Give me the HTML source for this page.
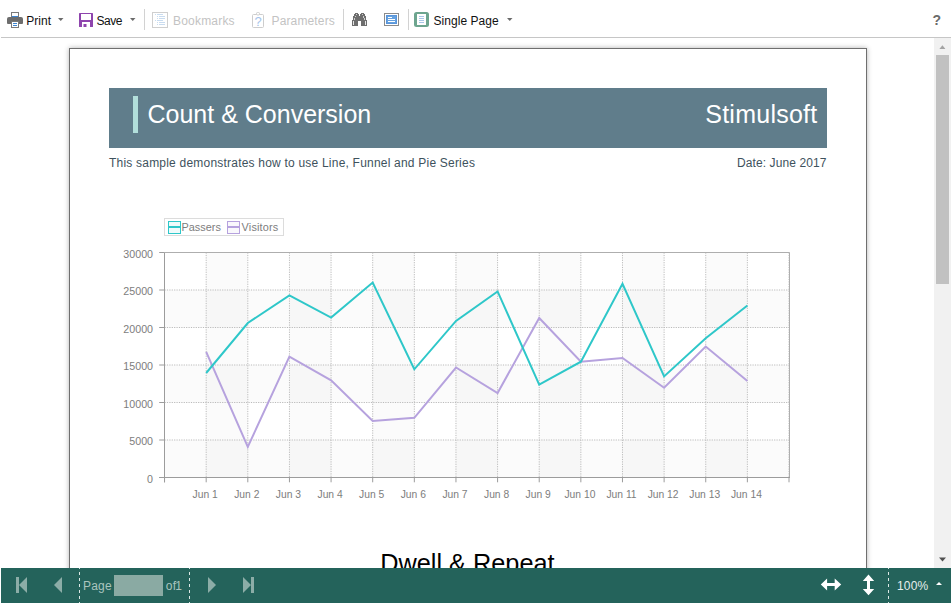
<!DOCTYPE html>
<html>
<head>
<meta charset="utf-8">
<title>Report Viewer</title>
<style>
html,body{margin:0;padding:0;background:#fff;}
body{width:952px;height:604px;position:relative;overflow:hidden;font-family:"Liberation Sans",Arial,sans-serif;font-size:12px;color:#000;}
.abs{position:absolute;}
#toolbar{position:absolute;left:1px;top:0;width:950px;height:37px;border-bottom:1px solid #c6c6c6;background:#fff;}
.tb-text{position:absolute;top:14px;height:14px;line-height:14px;font-size:12px;white-space:nowrap;color:#111;}
.tb-dis{color:#c3c3c3;}
.tb-sep{position:absolute;top:9px;width:1px;height:21px;background:#d2d2d2;}
.caret{position:absolute;width:0;height:0;border-left:3px solid transparent;border-right:3px solid transparent;border-top:3px solid #6b6b6b;}
#view{position:absolute;left:1px;top:38px;width:933px;height:530px;overflow:hidden;background:#fff;}
#page{position:absolute;left:68px;top:10px;width:796px;height:900px;border:1px solid #6f6f6f;background:#fff;box-shadow:0 0 5px rgba(0,0,0,0.3);}
#sb{position:absolute;left:934px;top:38px;width:17px;height:530px;background:#f1f1f1;}
#sb .thumb{position:absolute;left:2px;top:17px;width:13px;height:229px;background:#c1c1c1;}
#nav{position:absolute;left:1px;top:568px;width:950px;height:35px;background:#24635b;}
.nav-sep{position:absolute;top:0;width:1px;height:35px;background-image:linear-gradient(to bottom,#dbe8e5 50%,rgba(0,0,0,0) 50%);background-size:1px 6px;background-position:0 -2px;background-repeat:repeat-y;}
.nav-text{position:absolute;top:11px;height:14px;line-height:14px;font-size:12px;color:#aac5bf;white-space:nowrap;letter-spacing:0.2px;}
</style>
</head>
<body>

<div id="view">
  <div id="page">
    <!-- header band : page content origin is (70,49) in screen coords -->
    <div class="abs" style="left:39px;top:39px;width:718px;height:60px;background:#607d8b;"></div>
    <div class="abs" style="left:63px;top:47px;width:5px;height:37px;background:#b2dfdb;"></div>
    <div class="abs" id="t1" style="left:77.5px;top:50px;height:30px;line-height:30px;font-size:25px;color:#fff;white-space:nowrap;">Count &amp; Conversion</div>
    <div class="abs" id="t2" style="right:48.5px;top:50px;height:30px;line-height:30px;font-size:25px;color:#fff;white-space:nowrap;letter-spacing:0.25px;">Stimulsoft</div>
    <div class="abs" id="t3" style="left:39px;top:106px;height:16px;line-height:16px;font-size:12px;color:#3e525d;white-space:nowrap;letter-spacing:0.21px;">This sample demonstrates how to use Line, Funnel and Pie Series</div>
    <div class="abs" id="t4" style="right:39.5px;top:106px;height:16px;line-height:16px;font-size:12px;color:#3e525d;white-space:nowrap;letter-spacing:0.1px;">Date: June 2017</div>

    <!-- chart -->
    <svg class="abs" id="chart" style="left:0;top:150px;" width="796" height="320" viewBox="70 199 796 320" font-family="'Liberation Sans',Arial,sans-serif">
      <rect x="164.5" y="290.00" width="625.0" height="37.50" fill="#000" fill-opacity="0.016"/>
      <rect x="164.5" y="365.00" width="625.0" height="37.50" fill="#000" fill-opacity="0.016"/>
      <rect x="164.5" y="440.00" width="625.0" height="37.50" fill="#000" fill-opacity="0.016"/>
      <rect x="206.18" y="252.5" width="41.63" height="225.0" fill="#000" fill-opacity="0.016"/>
      <rect x="289.44" y="252.5" width="41.63" height="225.0" fill="#000" fill-opacity="0.016"/>
      <rect x="372.70" y="252.5" width="41.63" height="225.0" fill="#000" fill-opacity="0.016"/>
      <rect x="455.96" y="252.5" width="41.63" height="225.0" fill="#000" fill-opacity="0.016"/>
      <rect x="539.22" y="252.5" width="41.63" height="225.0" fill="#000" fill-opacity="0.016"/>
      <rect x="622.48" y="252.5" width="41.63" height="225.0" fill="#000" fill-opacity="0.016"/>
      <rect x="705.74" y="252.5" width="41.63" height="225.0" fill="#000" fill-opacity="0.016"/>
      <path d="M164.5 290.00 H789.5 M164.5 327.50 H789.5 M164.5 365.00 H789.5 M164.5 402.50 H789.5 M164.5 440.00 H789.5 M206.18 252.5 V477.5 M247.81 252.5 V477.5 M289.44 252.5 V477.5 M331.07 252.5 V477.5 M372.70 252.5 V477.5 M414.33 252.5 V477.5 M455.96 252.5 V477.5 M497.59 252.5 V477.5 M539.22 252.5 V477.5 M580.85 252.5 V477.5 M622.48 252.5 V477.5 M664.11 252.5 V477.5 M705.74 252.5 V477.5 M747.37 252.5 V477.5 M789.00 252.5 V477.5" stroke="#bbbbbb" stroke-width="1" stroke-dasharray="1.2 1.2" fill="none"/>
      <path d="M164.5 252.5 H789.5 V477.5" stroke="#aeaeae" stroke-width="1" fill="none"/>
      <path d="M164.5 252.5 V482.3 M159.2 477.5 H790.0 M159.2 252.50 H164.5 M159.2 290.00 H164.5 M159.2 327.50 H164.5 M159.2 365.00 H164.5 M159.2 402.50 H164.5 M159.2 440.00 H164.5 M159.2 477.50 H164.5 M164.55 477.5 V482.3 M206.18 477.5 V482.3 M247.81 477.5 V482.3 M289.44 477.5 V482.3 M331.07 477.5 V482.3 M372.70 477.5 V482.3 M414.33 477.5 V482.3 M455.96 477.5 V482.3 M497.59 477.5 V482.3 M539.22 477.5 V482.3 M580.85 477.5 V482.3 M622.48 477.5 V482.3 M664.11 477.5 V482.3 M705.74 477.5 V482.3 M747.37 477.5 V482.3 M789.00 477.5 V482.3" stroke="#9c9c9c" stroke-width="1" fill="none"/>
      <polyline points="206.2,351.8 247.8,446.9 289.4,356.6 331.1,380.3 372.7,421.0 414.3,417.8 456.0,367.5 497.6,393.0 539.2,318.0 580.9,361.7 622.5,358.0 664.1,387.8 705.7,346.6 747.4,380.9" fill="none" stroke="#b6a2de" stroke-width="2" stroke-linejoin="miter"/>
      <polyline points="206.2,373.0 247.8,323.0 289.4,295.4 331.1,317.6 372.7,282.6 414.3,369.3 456.0,320.9 497.6,291.4 539.2,384.6 580.9,361.7 622.5,283.8 664.1,376.4 705.7,338.2 747.4,305.5" fill="none" stroke="#2ec7c9" stroke-width="2" stroke-linejoin="miter"/>
      <text x="153" y="257.7" text-anchor="end" font-size="10.67" fill="#7d7d7d">30000</text>
      <text x="153" y="295.2" text-anchor="end" font-size="10.67" fill="#7d7d7d">25000</text>
      <text x="153" y="332.7" text-anchor="end" font-size="10.67" fill="#7d7d7d">20000</text>
      <text x="153" y="370.2" text-anchor="end" font-size="10.67" fill="#7d7d7d">15000</text>
      <text x="153" y="407.7" text-anchor="end" font-size="10.67" fill="#7d7d7d">10000</text>
      <text x="153" y="445.2" text-anchor="end" font-size="10.67" fill="#7d7d7d">5000</text>
      <text x="153" y="482.7" text-anchor="end" font-size="10.67" fill="#7d7d7d">0</text>
      <text x="205.2" y="498.1" text-anchor="middle" font-size="10.3" fill="#7d7d7d">Jun 1</text>
      <text x="246.8" y="498.1" text-anchor="middle" font-size="10.3" fill="#7d7d7d">Jun 2</text>
      <text x="288.4" y="498.1" text-anchor="middle" font-size="10.3" fill="#7d7d7d">Jun 3</text>
      <text x="330.1" y="498.1" text-anchor="middle" font-size="10.3" fill="#7d7d7d">Jun 4</text>
      <text x="371.7" y="498.1" text-anchor="middle" font-size="10.3" fill="#7d7d7d">Jun 5</text>
      <text x="413.3" y="498.1" text-anchor="middle" font-size="10.3" fill="#7d7d7d">Jun 6</text>
      <text x="455.0" y="498.1" text-anchor="middle" font-size="10.3" fill="#7d7d7d">Jun 7</text>
      <text x="496.6" y="498.1" text-anchor="middle" font-size="10.3" fill="#7d7d7d">Jun 8</text>
      <text x="538.2" y="498.1" text-anchor="middle" font-size="10.3" fill="#7d7d7d">Jun 9</text>
      <text x="579.9" y="498.1" text-anchor="middle" font-size="10.3" fill="#7d7d7d">Jun 10</text>
      <text x="621.5" y="498.1" text-anchor="middle" font-size="10.3" fill="#7d7d7d">Jun 11</text>
      <text x="663.1" y="498.1" text-anchor="middle" font-size="10.3" fill="#7d7d7d">Jun 12</text>
      <text x="704.7" y="498.1" text-anchor="middle" font-size="10.3" fill="#7d7d7d">Jun 13</text>
      <text x="746.4" y="498.1" text-anchor="middle" font-size="10.3" fill="#7d7d7d">Jun 14</text>
      <rect x="164.5" y="218.5" width="119" height="17" fill="#fff" stroke="#dcdcdc" stroke-width="1" shape-rendering="crispEdges"/>
      <rect x="168.5" y="221.5" width="12" height="12" fill="#2ec7c9" fill-opacity="0.08" stroke="#2ec7c9" stroke-width="1" shape-rendering="crispEdges"/><rect x="168" y="226" width="13" height="2" fill="#2ec7c9" shape-rendering="crispEdges"/>
      <text x="181.5" y="230.8" font-size="10.9" fill="#7d7d7d">Passers</text>
      <rect x="227.5" y="221.5" width="12" height="12" fill="#b6a2de" fill-opacity="0.08" stroke="#b6a2de" stroke-width="1" shape-rendering="crispEdges"/><rect x="227" y="226" width="13" height="2" fill="#b6a2de" shape-rendering="crispEdges"/>
      <text x="241.6" y="230.8" font-size="10.9" fill="#7d7d7d" letter-spacing="0.15">Visitors</text>
    </svg>

    <div class="abs" id="t5" style="left:-0.6px;width:796px;top:497px;text-align:center;height:34px;line-height:34px;font-size:25.3px;color:#000;white-space:nowrap;">Dwell &amp; Repeat</div>
  </div>
</div>

<div id="sb">
  <div class="thumb"></div>
  <svg class="abs" style="left:0;top:0" width="17" height="17"><path d="M5.400 11 L8.400 7.200 L11.400 11 Z" fill="#a3a3a3"/></svg>
  <svg class="abs" style="left:0;top:513px" width="17" height="17"><path d="M5 6.5 L12 6.5 L8.5 10.5 Z" fill="#505050"/></svg>
</div>

<div id="toolbar">
  <!-- coordinates inside toolbar are screen x - 1 -->
  <svg class="abs" style="left:6px;top:12px" width="16" height="16" viewBox="0 0 16 16">
    <rect x="4.5" y="0.5" width="7" height="5" fill="#fff" stroke="#7a7a7a"/>
    <rect x="5" y="4" width="6" height="1" fill="#3d85d1"/>
    <path d="M2 5 H14 Q16 5 16 7 V11 Q16 12 15 12 H1 Q0 12 0 11 V7 Q0 5 2 5 Z" fill="#6d6d6d"/>
    <rect x="4.5" y="9.5" width="7" height="6" fill="#fff" stroke="#7a7a7a"/>
    <rect x="6" y="11" width="4" height="1" fill="#3d85d1"/>
    <rect x="6" y="13" width="4" height="1" fill="#3d85d1"/>
  </svg>
  <div class="tb-text" style="left:25.3px;">Print</div>
  <svg class="abs" style="left:57px;top:18px" width="6" height="3" viewBox="0 0 6 3"><path d="M0 0 H5.500 L2.750 3 Z" fill="#6b6b6b"/></svg>

  <svg class="abs" style="left:78px;top:13px" width="14" height="14" viewBox="0 0 14 14">
    <rect x="0" y="0" width="14" height="14" rx="0.6" fill="#8e44ad"/>
    <rect x="2" y="1" width="10" height="6" fill="#fff"/>
    <rect x="3" y="9" width="8" height="5" fill="#fff"/>
    <rect x="4.5" y="11" width="3" height="3" fill="#8e44ad"/>
  </svg>
  <div class="tb-text" style="left:95.5px;letter-spacing:-0.5px;">Save</div>
  <svg class="abs" style="left:129px;top:18px" width="6" height="3" viewBox="0 0 6 3"><path d="M0 0 H5.500 L2.750 3 Z" fill="#6b6b6b"/></svg>

  <div class="tb-sep" style="left:143px;"></div>

  <svg class="abs" style="left:151px;top:12px" width="16" height="16" viewBox="0 0 16 16">
    <rect x="0.5" y="0.5" width="15" height="15" fill="#fff" stroke="#cfcfcf"/>
    <g fill="#c9dcf0">
      <rect x="3" y="2" width="1" height="1"/><rect x="5" y="2" width="6" height="1"/>
      <rect x="5" y="4" width="1" height="1"/><rect x="7" y="4" width="6" height="1"/>
      <rect x="5" y="6" width="1" height="1"/><rect x="7" y="6" width="6" height="1"/>
      <rect x="3" y="8" width="1" height="1"/><rect x="5" y="8" width="6" height="1"/>
      <rect x="5" y="10" width="1" height="1"/><rect x="7" y="10" width="6" height="1"/>
      <rect x="5" y="12" width="1" height="1"/><rect x="7" y="12" width="6" height="1"/>
    </g>
  </svg>
  <div class="tb-text tb-dis" style="left:172px;letter-spacing:0.2px;">Bookmarks</div>

  <svg class="abs" style="left:251px;top:11px" width="14" height="17" viewBox="0 0 14 17">
    <rect x="0.5" y="3.5" width="11" height="13" rx="1" fill="#fff" stroke="#cdcdcd"/>
    <rect x="4.5" y="1.5" width="3" height="2.5" rx="1" fill="#fff" stroke="#cdcdcd"/>
    <text x="6" y="14.6" text-anchor="middle" font-size="13" font-family="'Liberation Sans',Arial,sans-serif" fill="#a4c3ea">?</text>
  </svg>
  <div class="tb-text tb-dis" style="left:270.5px;letter-spacing:0.14px;">Parameters</div>

  <div class="tb-sep" style="left:342px;"></div>

  <svg class="abs" style="left:351px;top:13px" width="15" height="13" viewBox="0 0 15 13" shape-rendering="crispEdges">
    <path d="M3 0 H6 V1 H7 V3 H8 V1 H9 V0 H12 V1 H13 V3 H14 V7 H15 V13 H9 V8 H6 V13 H0 V7 H1 V3 H2 V1 H3 Z" fill="#6e6e6e"/>
    <g fill="#cfcfcf">
      <rect x="4" y="1" width="1" height="1"/><rect x="10" y="1" width="1" height="1"/>
      <rect x="3" y="3" width="1" height="1"/><rect x="11" y="3" width="1" height="1.500"/>
      <rect x="2" y="5" width="1" height="1.500"/><rect x="12" y="5" width="1" height="1.500"/>
      <rect x="1" y="8" width="1" height="4" fill="#e4e4e4"/><rect x="13" y="8" width="1" height="4" fill="#e4e4e4"/>
    </g>
  </svg>

  <svg class="abs" style="left:383px;top:13px" width="15" height="13" viewBox="0 0 15 13">
    <rect x="0.5" y="0.5" width="14" height="12" fill="#fff" stroke="#8b8b8b"/>
    <rect x="2" y="2" width="11" height="9" fill="#5894da"/><rect x="3" y="3" width="9" height="7" fill="#65a1df"/>
    <rect x="4" y="4" width="4" height="1" fill="#fff"/>
    <rect x="4" y="6" width="7" height="1" fill="#fff"/>
    <rect x="4" y="8" width="7" height="1" fill="#fff"/>
  </svg>

  <div class="tb-sep" style="left:407px;"></div>

  <svg class="abs" style="left:413px;top:12px" width="15" height="15" viewBox="0 0 15 15">
    <rect x="0" y="0" width="15" height="15" rx="2.5" fill="#6da58f"/>
    <rect x="3" y="2" width="9" height="11" fill="#fff"/>
    <rect x="5" y="4" width="5" height="1" fill="#a9c6e8"/>
    <rect x="5" y="6" width="5" height="1" fill="#a9c6e8"/>
    <rect x="5" y="8" width="5" height="1" fill="#a9c6e8"/>
    <rect x="5" y="10" width="5" height="1" fill="#a9c6e8"/>
  </svg>
  <div class="tb-text" style="left:432.5px;letter-spacing:0.05px;">Single Page</div>
  <svg class="abs" style="left:506px;top:18px" width="6" height="3" viewBox="0 0 6 3"><path d="M0 0 H5.500 L2.750 3 Z" fill="#6b6b6b"/></svg>

  <div class="abs" style="left:931.5px;top:12px;height:16px;line-height:16px;font-size:14px;font-weight:bold;color:#6b6b6b;">?</div>

</div>

<div id="nav">
  <!-- coordinates inside nav are screen x - 1, screen y - 568 -->
  <svg class="abs" style="left:14px;top:9px" width="13" height="16" viewBox="0 0 13 16">
    <rect x="1" y="0" width="3" height="16" fill="#8cada7"/>
    <path d="M12 0 V16 L4 8 Z" fill="#8cada7"/>
  </svg>
  <svg class="abs" style="left:52px;top:9px" width="9" height="16" viewBox="0 0 9 16">
    <path d="M9 0 V16 L1 8 Z" fill="#8cada7"/>
  </svg>
  <div class="nav-sep" style="left:78px;"></div>
  <div class="nav-text" style="left:82px;">Page</div>
  <div class="abs" style="left:113px;top:7px;width:49px;height:21px;background:#8aaaa3;"></div>
  <div class="nav-text" style="left:164.8px;">of</div>
  <div class="nav-text" style="left:174.3px;">1</div>
  <div class="nav-sep" style="left:188px;"></div>
  <svg class="abs" style="left:207px;top:9px" width="9" height="16" viewBox="0 0 9 16">
    <path d="M0 0 V16 L8 8 Z" fill="#8cada7"/>
  </svg>
  <svg class="abs" style="left:241px;top:9px" width="13" height="16" viewBox="0 0 13 16">
    <rect x="9" y="0" width="3" height="16" fill="#8cada7"/>
    <path d="M1 0 V16 L9 8 Z" fill="#8cada7"/>
  </svg>

  <svg class="abs" style="left:0;top:0" width="950" height="35" viewBox="0 0 950 35">
    <path d="M819.800 16.500 L826.100 10.600 V15 H833.700 V10.600 L840.200 16.500 L833.700 22.400 V18 H826.100 V22.400 Z" fill="#fff"/>
    <path d="M867.500 6.400 L873.200 13.100 H869 V20.900 H873.200 L867.500 27.200 L861.800 20.900 H866 V13.100 H861.800 Z" fill="#fff"/>
  </svg>
  <div class="nav-sep" style="left:887px;"></div>
  <div class="nav-text" style="left:896px;color:#e4eeec;">100%</div>
  <div class="abs" style="left:935px;top:14px;width:0;height:0;border-left:3px solid transparent;border-right:3px solid transparent;border-bottom:3px solid #fff;"></div>

</div>

</body>
</html>
